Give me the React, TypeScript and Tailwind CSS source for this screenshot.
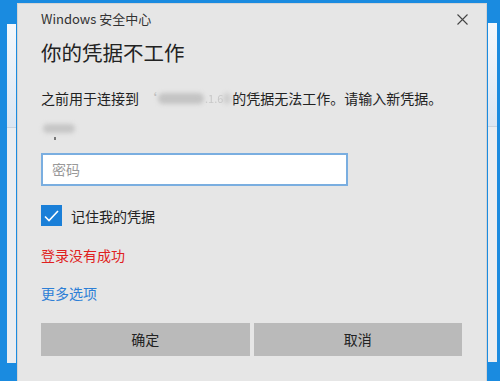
import React from 'react';

const font = { fontFamily: '"Noto Sans CJK SC", "Noto Sans", sans-serif' };

// background window edge peeking out beside the dialog
const SidePanel: React.FC<{ className?: string }> = ({ className }) => (
  <div className={`flex flex-col w-[9px] ${className ?? ''}`}>
    <div className="h-[104px] bg-gradient-to-b from-[#f4f8fc] to-[#dbe6f2] border-b border-[#c9d3de]" />
    <div className="flex-1 bg-[#e9edf1]" />
  </div>
);

const App: React.FC = () => {
  return (
    <div className="w-[500px] h-[381px] overflow-hidden bg-[#1a8be0] flex" style={font}>
      {/* left background window */}
      <div className="w-[17px] pl-[7px] pt-[24px] pb-[18px] flex">
        <SidePanel />
      </div>

      {/* dialog */}
      <div className="w-[470px] mt-[3px] bg-[#e6e6e6] border-t border-x border-[#d4d4d4] pl-[23px] pr-[24px] flex flex-col">
        <div className="flex items-center justify-between h-[20px] mt-[5px]">
          <span className="text-[13px] leading-[20px] text-[#333]">Windows 安全中心</span>
          <svg width="11" height="11" viewBox="0 0 11 11" className="mr-[-6px]">
            <path d="M0.5 0.5 L10.5 10.5 M10.5 0.5 L0.5 10.5" stroke="#444" strokeWidth="1.1" />
          </svg>
        </div>

        <h1 className="mt-[9px] text-[20.5px] leading-[28px] text-[#222]">你的凭据不工作</h1>

        <p className="mt-[22px] text-[14px] leading-[20px] text-[#222] flex items-center whitespace-nowrap">
          之前用于连接到
          <span className="ml-[4px] text-[#bbb]">‘</span>
          <span className="w-[46px] h-[11px] rounded-full bg-[#c4c4c4] blur-[2px] mx-[1px]" />
          <span className="text-[#c8c8c8] text-[11px] blur-[0.6px]">.1.6</span>
          <span className="w-[8px] h-[11px] rounded-full bg-[#cfcfcf] blur-[2px] mr-[1px]" />
          的凭据无法工作。请输入新凭据。
        </p>

        {/* blurred user name label */}
        <div className="mt-[16px] h-[18px] flex flex-col pl-[2px]">
          <div className="w-[32px] h-[9px] rounded-full bg-[#c6c6c6] blur-[2px]" />
          <div className="w-[2px] h-[3px] bg-[#777] ml-[11px] mt-[4px]" />
        </div>

        <div className="mt-[11px] w-[307px] h-[33px] bg-white border-2 border-[#7aaee0] flex items-center px-[9px]">
          <span className="text-[14px] text-[#999]">密码</span>
        </div>

        <label className="mt-[19px] flex items-center gap-[9px]">
          <span className="w-[21px] h-[21px] bg-[#1a7fd8] flex items-center justify-center">
            <svg width="15" height="12" viewBox="0 0 15 12">
              <path d="M1 6.5 L5 10.5 L14 1" fill="none" stroke="#fff" strokeWidth="1.6" />
            </svg>
          </span>
          <span className="text-[14px] leading-[20px] text-[#222]">记住我的凭据</span>
        </label>

        <p className="mt-[19px] text-[14px] leading-[20px] text-[#e02020]">登录没有成功</p>

        <p className="mt-[18px] text-[14px] leading-[20px] text-[#2d7fd6]">更多选项</p>

        <div className="mt-[20px] flex gap-[4px]">
          <button className="flex-1 h-[33px] bg-[#bababa] text-[14px] text-[#222]">确定</button>
          <button className="flex-1 h-[33px] bg-[#bababa] text-[14px] text-[#222]">取消</button>
        </div>
      </div>

      {/* right background window */}
      <div className="flex-1 pl-[1px] pt-[23px] pb-[19px] flex">
        <SidePanel />
      </div>
    </div>
  );
};

export default App;
